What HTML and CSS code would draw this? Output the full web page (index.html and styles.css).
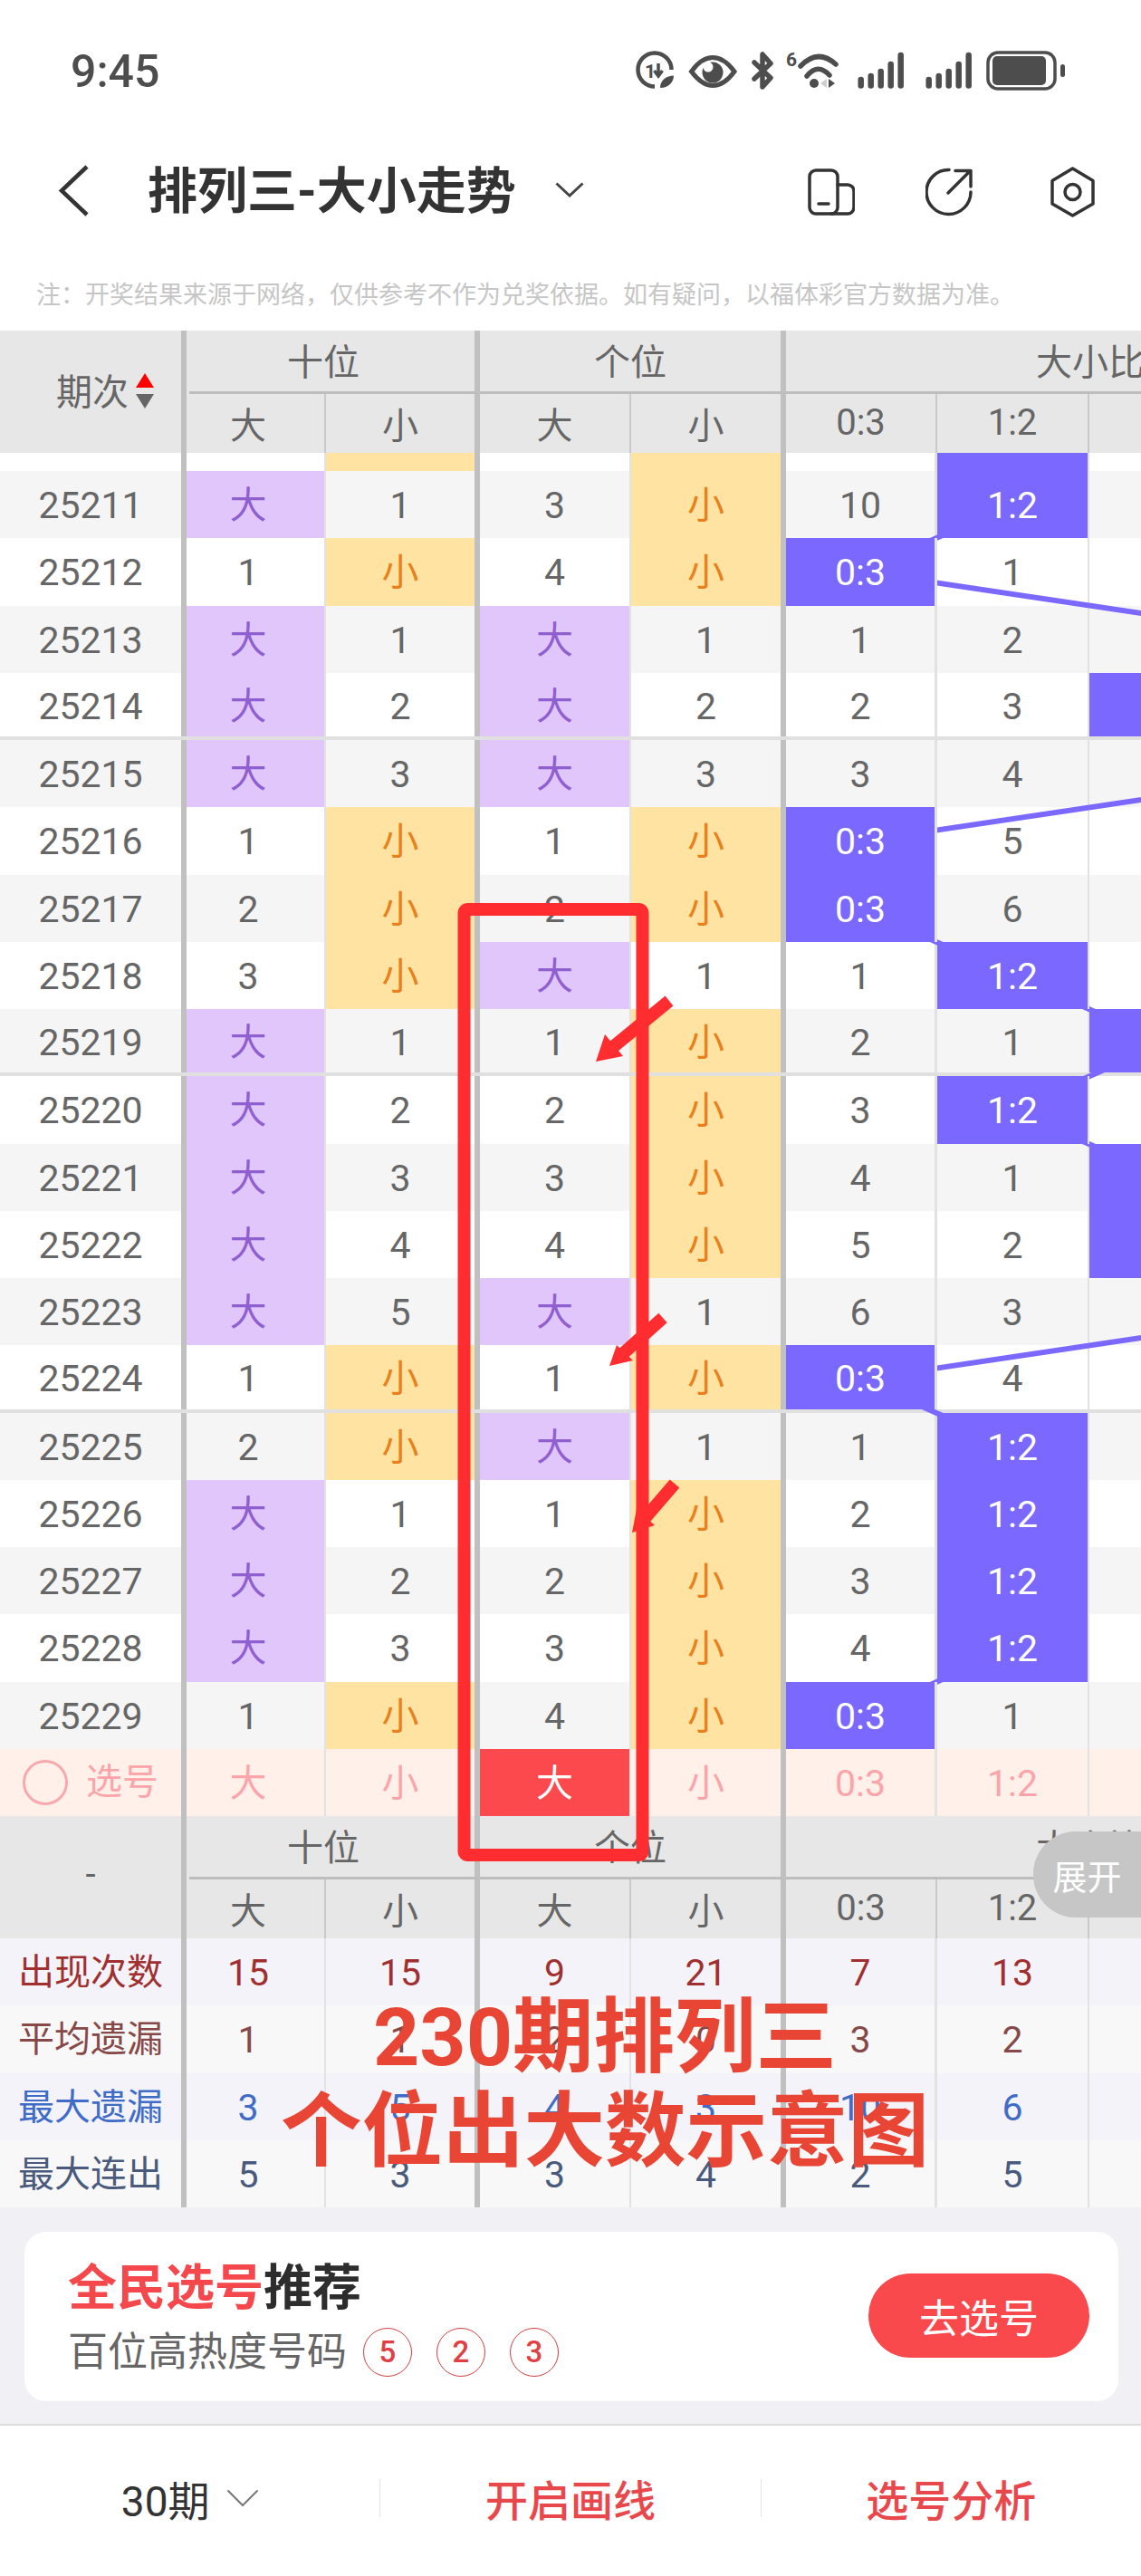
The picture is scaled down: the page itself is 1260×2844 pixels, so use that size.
FILE: index.html
```html
<!DOCTYPE html>
<html>
<head>
    <meta http-equiv="Content-Type" content="text/html; charset=UTF-8">
    <title>排列三-大小走势</title>
    <link rel="stylesheet" href="styles.css">
</head>
<body>
<div class="page">
    <div class="status">
        <span class="time">9:45</span>
        <svg class="status-icons" viewBox="700 54 480 50" width="480" height="50">
            <g fill="none" stroke="#4d4d4d" stroke-width="4.5">
                <path d="M723 95.5A18.5 18.5 0 1 1 741.5 77"/>
                <path stroke-width="3.5" d="M727 70V83M722.5 78L727 84L731.5 78"/>
                <path stroke-width="5" d="M763.5 79C772 67 780 63.5 787 63.5C795 63.5 803 68 811 79C803 90 795 94.5 787 94.5C780 94.5 772 90 763.5 79Z"/>
                <path stroke-width="5.5" stroke-linecap="round" stroke-linejoin="round" d="M833 87L851 70L842 60V96L851 86L833 69"/>
                <path stroke-width="5.5" stroke-linecap="round" d="M884 73Q903 53 923 71M891 84Q903 69 916 83"/>
            </g>
            <g fill="#4d4d4d">
                <text class="status-num" x="712" y="86">1</text>
                <path d="M729 97C729 88 736 84 744 83.5C744 91 738 97 729 97Z"/>
                <circle cx="787" cy="80" r="11.5"/>
                <text class="status-num" x="868" y="73">6</text>
                <circle cx="899" cy="92" r="5"/>
                <path d="M915 87V97L922 92Z"/>
                <rect x="1096" y="62" width="59" height="32" rx="5"/>
                <rect x="1171" y="71" width="5" height="14" rx="2.5"/>
            </g>
            <circle cx="782" cy="74" r="5.5" fill="#fff"/>
            <path d="M913 87V97L906 92Z" fill="#cfcfcf"/>
            <g stroke="#4d4d4d" stroke-width="6.5" stroke-linecap="round">
                <path d="M950.7 88V94.5M961.7 84V94.5M972.7 79V94.5M983.7 71V94.5M994.7 61V94.5"/>
                <path d="M1025.7 88V94.5M1036.7 84V94.5M1047.7 79V94.5M1058.7 71V94.5M1069.7 61V94.5"/>
            </g>
            <rect x="1091" y="58" width="74" height="40" rx="11" fill="none" stroke="#4d4d4d" stroke-width="3.5"/>
        </svg>
    </div>

    <div class="nav">
        <svg class="back" viewBox="0 0 36 58" width="36" height="58"><path d="M32 3L4 29.5L32 56"/></svg>
        <span class="title">排列三-大小走势</span>
        <svg class="title-arrow" viewBox="0 0 32 17" width="32" height="17"><path d="M1.5 1.5L16 15L30.5 1.5"/></svg>
        <svg class="nav-icon phone" viewBox="0 0 52 52" width="52" height="52">
            <rect x="2" y="2" width="31" height="48" rx="7"/>
            <path d="M33 18H44A7 7 0 0 1 51 25V43A7 7 0 0 1 44 50H26"/>
            <path d="M12 39H23"/>
        </svg>
        <svg class="nav-icon share" viewBox="0 0 54 54" width="54" height="54">
            <path d="M26 2.5A24.5 24.5 0 1 0 50 27"/>
            <path d="M25 28L49 4M33 3.5H50V21"/>
        </svg>
        <svg class="nav-icon hexa" viewBox="0 0 50 56" width="50" height="56">
            <path d="M24.5 2L47 15.500V41L24.500 54L2 41V15.500Z"/>
            <circle cx="24.500" cy="28" r="8.500"/>
        </svg>
    </div>

    <div class="note">注：开奖结果来源于网络，仅供参考不作为兑奖依据。如有疑问，以福体彩官方数据为准。</div>

    <div class="table">
        <div class="head">
            <div class="corner">
                <span>期次</span>
                <i class="sort"><b class="up"></b><b class="down"></b></i>
            </div>
            <div class="group g1 bar">十位</div>
            <div class="group g2 bar">个位</div>
            <div class="group g3">大小比</div>
            <div class="s shift">大</div><div class="s bar">小</div><div class="s">大</div><div class="s bar">小</div>
            <div class="s">0:3</div><div class="s">1:2</div><div class="s"></div><div class="s"></div>
        </div>

        <div class="rows">
            <div class="row cut"><div></div><div></div><div class="x"></div><div></div><div class="x"></div><div></div><div class="r"></div><div></div></div>
            <div class="row"><div>25211</div><div class="d">大</div><div>1</div><div>3</div><div class="x">小</div><div>10</div><div class="r">1:2</div><div></div></div>
            <div class="row"><div>25212</div><div>1</div><div class="x">小</div><div>4</div><div class="x">小</div><div class="r">0:3</div><div>1</div><div></div></div>
            <div class="row"><div>25213</div><div class="d">大</div><div>1</div><div class="d">大</div><div>1</div><div>1</div><div>2</div><div></div></div>
            <div class="row sep"><div>25214</div><div class="d">大</div><div>2</div><div class="d">大</div><div>2</div><div>2</div><div>3</div><div class="r"></div></div>
            <div class="row"><div>25215</div><div class="d">大</div><div>3</div><div class="d">大</div><div>3</div><div>3</div><div>4</div><div></div></div>
            <div class="row"><div>25216</div><div>1</div><div class="x">小</div><div>1</div><div class="x">小</div><div class="r">0:3</div><div>5</div><div></div></div>
            <div class="row"><div>25217</div><div>2</div><div class="x">小</div><div>2</div><div class="x">小</div><div class="r">0:3</div><div>6</div><div></div></div>
            <div class="row"><div>25218</div><div>3</div><div class="x">小</div><div class="d">大</div><div>1</div><div>1</div><div class="r">1:2</div><div></div></div>
            <div class="row sep"><div>25219</div><div class="d">大</div><div>1</div><div>1</div><div class="x">小</div><div>2</div><div>1</div><div class="r"></div></div>
            <div class="row"><div>25220</div><div class="d">大</div><div>2</div><div>2</div><div class="x">小</div><div>3</div><div class="r">1:2</div><div></div></div>
            <div class="row"><div>25221</div><div class="d">大</div><div>3</div><div>3</div><div class="x">小</div><div>4</div><div>1</div><div class="r"></div></div>
            <div class="row"><div>25222</div><div class="d">大</div><div>4</div><div>4</div><div class="x">小</div><div>5</div><div>2</div><div class="r"></div></div>
            <div class="row"><div>25223</div><div class="d">大</div><div>5</div><div class="d">大</div><div>1</div><div>6</div><div>3</div><div></div></div>
            <div class="row sep"><div>25224</div><div>1</div><div class="x">小</div><div>1</div><div class="x">小</div><div class="r">0:3</div><div>4</div><div></div></div>
            <div class="row"><div>25225</div><div>2</div><div class="x">小</div><div class="d">大</div><div>1</div><div>1</div><div class="r">1:2</div><div></div></div>
            <div class="row"><div>25226</div><div class="d">大</div><div>1</div><div>1</div><div class="x">小</div><div>2</div><div class="r">1:2</div><div></div></div>
            <div class="row"><div>25227</div><div class="d">大</div><div>2</div><div>2</div><div class="x">小</div><div>3</div><div class="r">1:2</div><div></div></div>
            <div class="row"><div>25228</div><div class="d">大</div><div>3</div><div>3</div><div class="x">小</div><div>4</div><div class="r">1:2</div><div></div></div>
            <div class="row"><div>25229</div><div>1</div><div class="x">小</div><div>4</div><div class="x">小</div><div class="r">0:3</div><div>1</div><div></div></div>
        </div>

        <div class="row pick">
            <div class="pick-label"><i class="ring"></i>选号</div>
            <div>大</div><div>小</div><div class="sel">大</div><div>小</div><div>0:3</div><div>1:2</div><div></div>
        </div>

        <div class="head">
            <div class="corner dash">-</div>
            <div class="group g1 bar">十位</div>
            <div class="group g2 bar">个位</div>
            <div class="group g3">大小比</div>
            <div class="s shift">大</div><div class="s bar">小</div><div class="s">大</div><div class="s bar">小</div>
            <div class="s">0:3</div><div class="s">1:2</div><div class="s"></div><div class="s"></div>
        </div>

        <div class="row stat c1"><div>出现次数</div><div>15</div><div>15</div><div>9</div><div>21</div><div>7</div><div>13</div><div></div></div>
        <div class="row stat c2"><div>平均遗漏</div><div>1</div><div>1</div><div>2</div><div>0</div><div>3</div><div>2</div><div></div></div>
        <div class="row stat c3"><div>最大遗漏</div><div>3</div><div>5</div><div>4</div><div>3</div><div>10</div><div>6</div><div></div></div>
        <div class="row stat c4"><div>最大连出</div><div>5</div><div>3</div><div>3</div><div>4</div><div>2</div><div>5</div><div></div></div>
    </div>

    <div class="promo">
        <div class="card">
            <div class="card-text">
                <div class="card-title"><em>全民选号</em>推荐</div>
                <div class="card-sub">百位高热度号码<span class="ball">5</span><span class="ball">2</span><span class="ball">3</span></div>
            </div>
            <div class="go">去选号</div>
        </div>
    </div>

    <div class="foot">
        <div class="foot-item period">30期
            <svg viewBox="0 0 36 20" width="36" height="20"><path d="M1.500 1.500L18 18L34.500 1.500"/></svg>
        </div>
        <div class="foot-item link">开启画线</div>
        <div class="foot-item link">选号分析</div>
    </div>

    <!-- 走势连线，压在普通格子上面、高亮格子下面 -->
    <svg class="trend" viewBox="0 0 1260 2844" width="1260" height="2844">
        <polyline points="1118,557 950,631 1455,706 1287,780 1455,854 950,929 950,1003 1118,1077 1287,1151 1118,1226 1287,1300 1287,1374 1455,1448 950,1523 1118,1597 1118,1671 1118,1746 1118,1820 950,1894"/>
    </svg>

    <!-- 手工标注 -->
    <svg class="marks" viewBox="0 0 1260 2844" width="1260" height="2844">
        <rect x="512.500" y="1004" width="197" height="1044" rx="4"/>
        <path class="shaft" d="M739 1105L672 1160"/>
        <path class="head-tip" d="M658 1172L668 1142L688 1166Z"/>
        <path class="shaft" d="M732 1455L684 1498"/>
        <path class="head-tip" d="M673 1508L681 1485L699 1502Z"/>
        <path class="shaft" d="M745 1638L708 1681"/>
        <path class="head-tip" d="M698 1692L703 1666L723 1684Z"/>
    </svg>

    <div class="caption">230期排列三<br>个位出大数示意图</div>
    <div class="unfold">展开</div>
</div>
</body>
</html>
```

FILE: styles.css
```css
*{box-sizing:border-box;}
html,body{margin:0; padding:0; background:#fff;}
body{font-family:Roboto,"Noto Sans CJK SC",sans-serif; color:#666;}
.page{position:relative; width:1260px; height:2844px; overflow:hidden; display:flex; flex-direction:column;}

/* 状态栏 */
.status{height:130px; flex:none; display:flex; align-items:flex-start; justify-content:space-between; padding:54px 80px 0 78px;}
.time{font-size:50px; line-height:50px; font-weight:500; color:#4d4d4d;}
.status-icons{display:block;}
.status-num{font-family:Roboto,sans-serif; font-size:21px; font-weight:700;}

/* 标题栏 */
.nav{height:160px; flex:none; display:flex; align-items:center; padding:0 0 0 64px;}
.back{flex:none;}
.back path{fill:none; stroke:#333; stroke-width:4.500;}
.title{margin-left:63px; margin-top:2px; font-size:55px; line-height:70px; font-weight:700; color:#333; white-space:nowrap;}
.title-arrow{flex:none; margin-left:43px; margin-top:-2px;}
.title-arrow path{fill:none; stroke:#444; stroke-width:3;}
.nav-icon{flex:none; margin-top:3px;}
.nav-icon *{fill:none; stroke:#333; stroke-width:3.500; stroke-linejoin:round; stroke-linecap:round;}
.phone{margin-left:247px;}
.share{margin-left:78px;}
.hexa{margin-left:84px;}

.note{height:75px; flex:none; padding:18px 0 0 40px; font-size:27px; line-height:36px; color:#c6c6c6; white-space:nowrap;}

/* 走势表 */
.table{flex:none; width:1260px; overflow:hidden; background:#fff;}
.head,.row{display:grid; grid-template-columns:206px 154px 170px 167px 171px 167px 168px 168px; width:1371px;}
.head{grid-template-rows:70px 65px; background:#e7e7e7; height:135px; font-size:40px;}
.head > div{display:flex; align-items:center; justify-content:center;}
.corner{grid-row:1 / 3; grid-column:1; border-right:6px solid #c0c0c0; padding-bottom:5px; font-size:40px;}
.head .corner{justify-content:flex-start; padding-left:62px;}
.head .corner.dash{justify-content:center; padding:0 0 6px 0;}
.sort{display:flex; flex-direction:column; gap:7px; margin-left:8px; margin-top:2px;}
.sort b{display:block; width:0; height:0; border-left:10px solid transparent; border-right:10px solid transparent;}
.up{border-bottom:16px solid #f00;}
.down{border-top:16px solid #666;}
.group{border-bottom:3px solid #bdbdbd; padding-bottom:3px;}
.g1{grid-column:2 / 4; margin-left:3px; padding-right:19px;}
.g2{grid-column:4 / 6;}
.g3{grid-column:6 / 10; width:672px;}
.bar{border-right:6px solid #c0c0c0;}
.s{border-right:2.500px solid #c9c9c9; padding-bottom:2px;}
.s.bar{border-right:6px solid #c0c0c0;}
.shift{padding-right:16px;}

.row{height:74.250px; font-size:41px; line-height:48px;}
.row > div{display:flex; align-items:center; justify-content:center; padding-top:2px;}
.row.sep > div{padding-top:4px;}
.row > div:nth-child(1),
.row > div:nth-child(3),
.row > div:nth-child(5){border-right:6px solid #c0c0c0;}
.row > div:nth-child(2),
.row > div:nth-child(4),
.row > div:nth-child(6),
.row > div:nth-child(7){border-right:2.500px solid #e2e2e2;}
.row > div:nth-child(2){padding-right:16px;}
.row > div:nth-child(6){border-right-width:3px;}
.rows .row:nth-child(even){background:#f5f5f5;}
.rows .row.cut{height:20px;}
.row.sep{border-bottom:4px solid #e0e0e0;}
.row .d{background:#e1c6fc; color:#8f5ecf; position:relative; z-index:2;}
.row .x{background:#fee3a2; color:#e8801c; position:relative; z-index:2;}
.row .r{background:#7b68fe; color:#fff; position:relative; z-index:2;}

.pick{background:#fff0ea; color:#fba4a9;}
.row.pick .pick-label{justify-content:flex-start; padding:0 0 0 25px; font-size:40px;}
.ring{display:block; flex:none; width:50px; height:50px; margin-right:20px; border:3px solid #f9a8ab; border-radius:50%;}
.row.pick .sel{background:#fb494d; color:#fff; border-right-color:#fff0ea;}

.stat > div:first-child{font-size:40px;}
.c1,.c3{background:#f3f3f9;}
.c2,.c4{background:#f8f8f8;}
.c1{color:#a03030;}
.c2{color:#874848;}
.c3{color:#3f6cc6;}
.c4{color:#4a5a7c;}

/* 推荐卡片 */
.promo{flex:none; height:241px; padding:27px 25px 0 27px; background:#f1f1f5; border-bottom:2px solid #dcdcdc;}
.card{height:187px; display:flex; align-items:center; justify-content:space-between; padding:0 32px 0 48px; background:#fff; border-radius:24px;}
.card-title{font-size:54px; line-height:66px; font-weight:700; color:#2d2d2d; margin-top:2px;}
.card-title em{font-style:normal; color:#f4484c;}
.card-sub{display:flex; align-items:center; margin-top:10px; font-size:44px; line-height:54px; color:#666;}
.ball{display:flex; align-items:center; justify-content:center; width:54px; height:54px; margin-left:27px; border:1.500px solid #cf4040; border-radius:50%; font-size:33px; font-weight:500; color:#e04045;}
.ball:first-of-type{margin-left:18px;}
.go{width:244px; height:93px; margin-top:-2px; display:flex; align-items:center; justify-content:center; background:#f9494d; border-radius:47px; color:#fff; font-size:44px;}

/* 底栏 */
.foot{flex:1; display:flex; align-items:center; background:#fff; padding-bottom:7px;}
.foot-item{flex:1; display:flex; align-items:center; justify-content:center; height:42px; font-size:47px; border-left:1px solid #e4e4e4;}
.foot-item:first-child{border-left:0;}
.period{color:#333; font-size:46px;}
.period svg{margin-left:18px;}
.period path{fill:none; stroke:#777; stroke-width:2;}
.link{color:#e8474c; font-weight:500;}

/* 叠加层 */
.trend{position:absolute; left:0; top:0; z-index:1; pointer-events:none;}
.trend polyline{fill:none; stroke:#7b68fe; stroke-width:6;}
.marks{position:absolute; left:0; top:0; z-index:3; pointer-events:none;}
.marks rect{fill:none; stroke:#ff2d30; stroke-width:14;}
.shaft{fill:none; stroke:#ff2d30; stroke-width:14;}
.head-tip{fill:#ff2d30;}
.caption{position:absolute; left:268px; top:2198px; width:800px; z-index:3; text-align:center; font-size:89.500px; line-height:104px; font-weight:700; color:#e84535; white-space:nowrap;}
.unfold{position:absolute; right:0; top:2022px; width:119px; height:95px; z-index:3; display:flex; align-items:center; justify-content:center; background:#c6c6c6; border-radius:47px 0 0 47px; color:#fff; font-size:38px;}
```
